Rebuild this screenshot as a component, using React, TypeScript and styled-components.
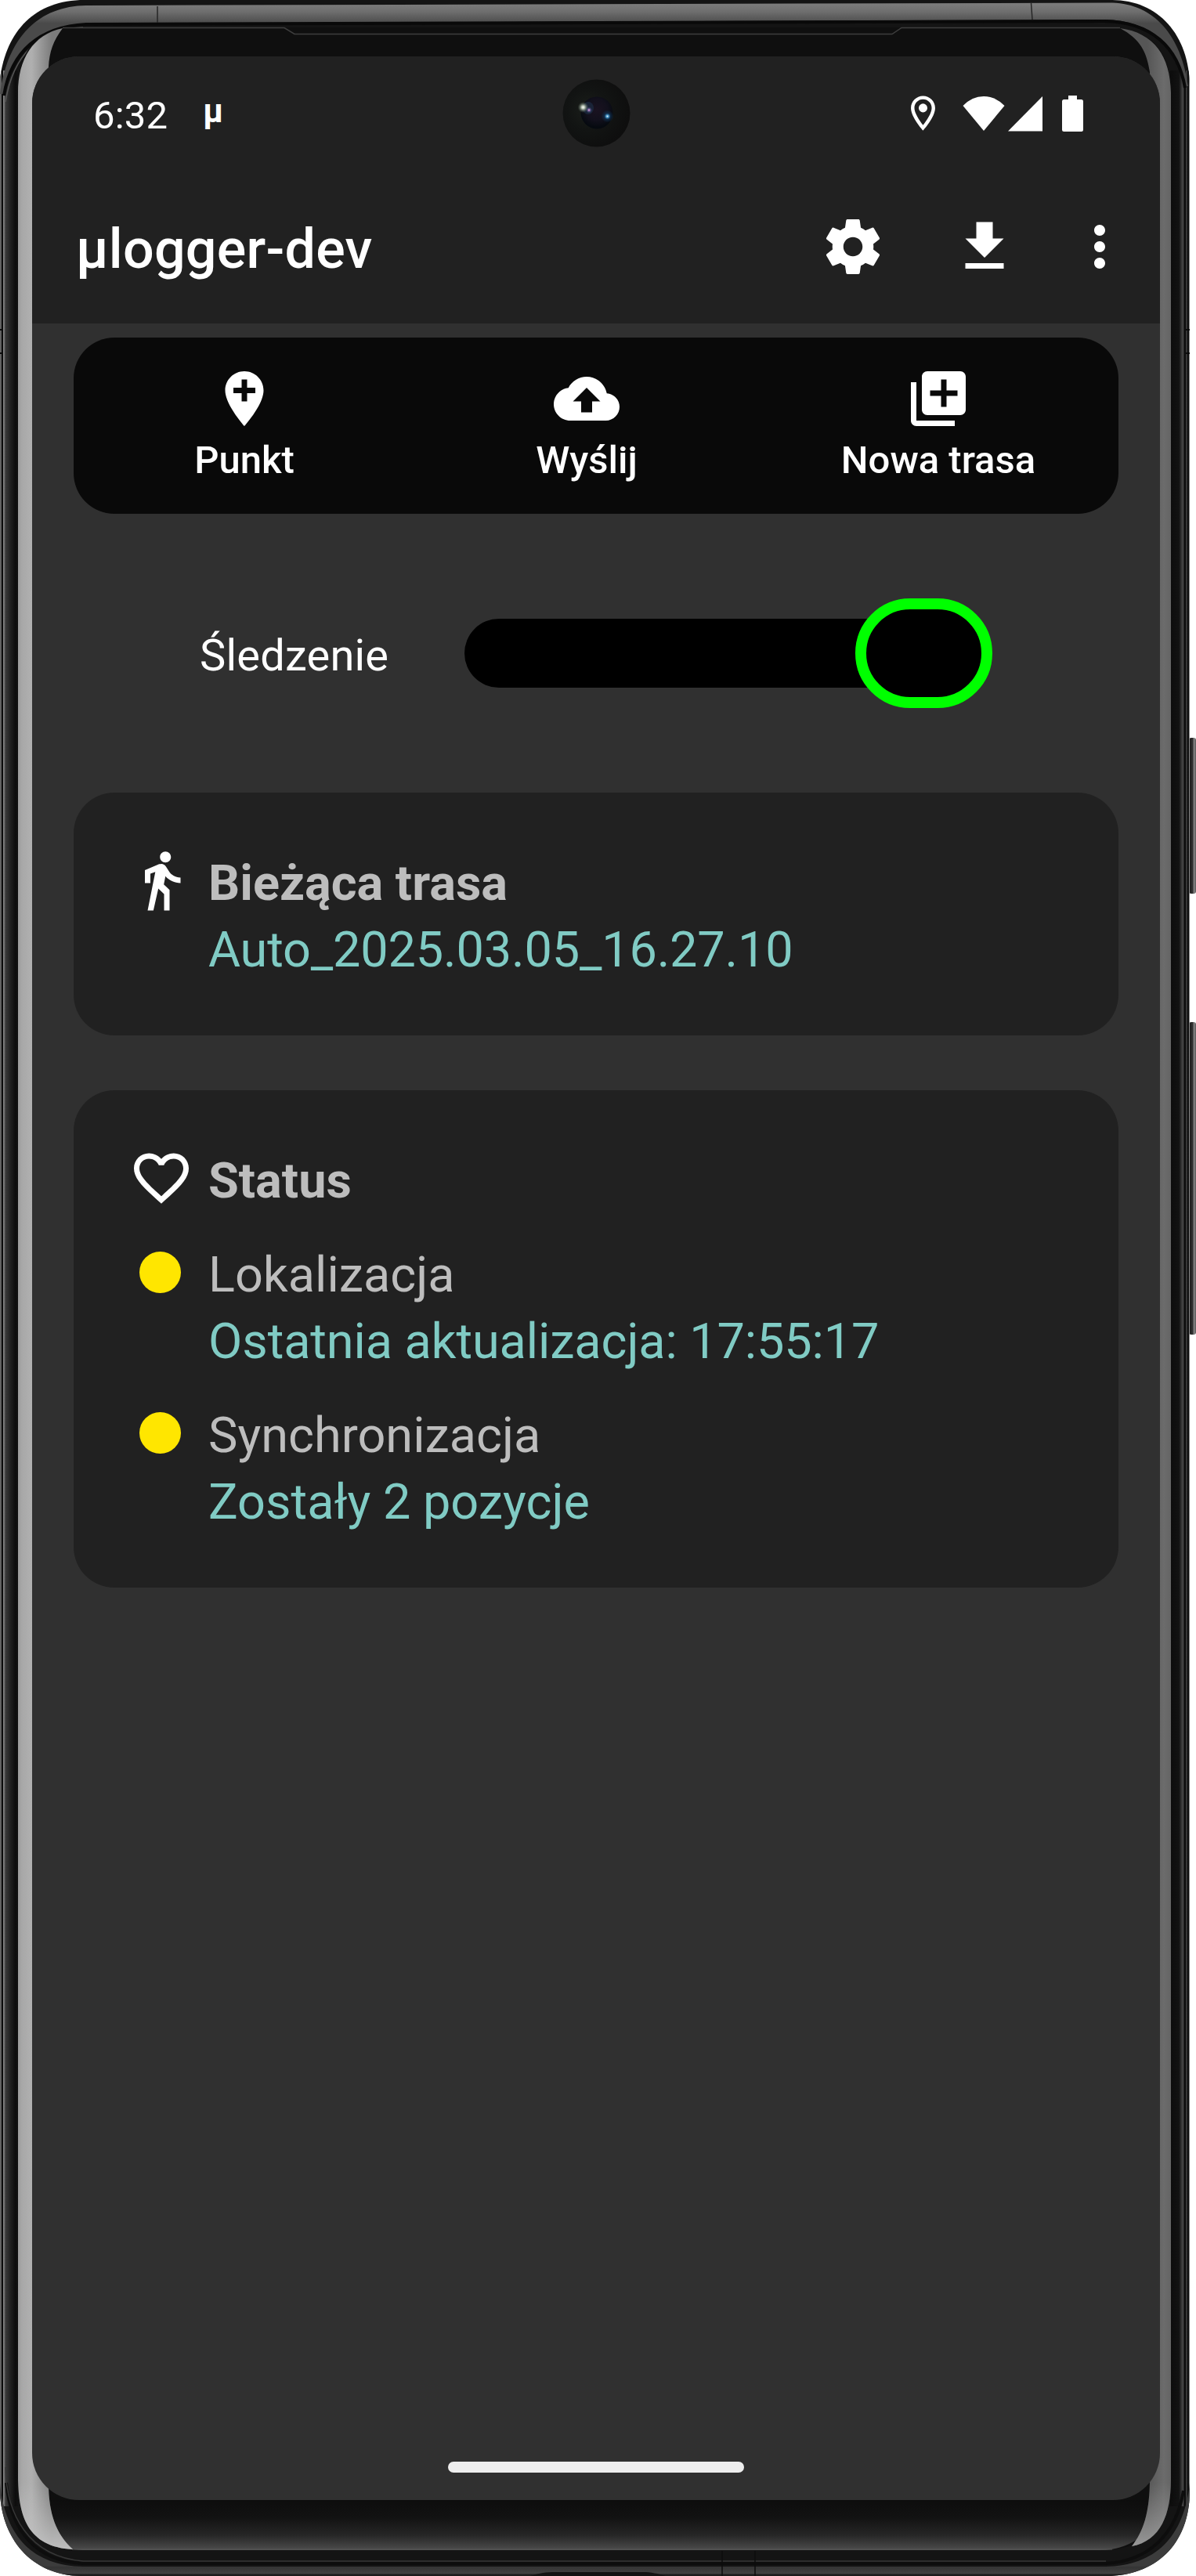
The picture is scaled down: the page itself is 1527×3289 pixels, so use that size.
import React from "react";
import styled, { createGlobalStyle } from "styled-components";

const GlobalStyle = createGlobalStyle`
  * { box-sizing: border-box; }
  body {
    margin: 0;
    background: #ffffff;
    font-family: Roboto, "Noto Sans", sans-serif;
  }
`;

const palette = {
  bar: "#212121",
  surface: "#303030",
  card: "#212121",
  actions: "#090909",
  text: "#ffffff",
  muted: "#bdbdbd",
  accent: "#80cbc4",
  warn: "#ffe600",
  active: "#00ff00",
};

const Device = styled.div`
  position: relative;
  width: 1527px;
  height: 3289px;
  padding: 72px 0 0 41px;
  overflow: hidden;
`;

const FrameArt = styled.svg`
  position: absolute;
  inset: 0;
  display: block;
`;

const Screen = styled.div`
  position: relative;
  display: flex;
  flex-direction: column;
  width: 1440px;
  height: 3120px;
  border-radius: 60px;
  overflow: hidden;
  background: ${palette.surface};
  color: ${palette.text};
`;

const CameraArt = styled.svg`
  position: absolute;
  left: 676px;
  top: 28px;
`;

const StatusBar = styled.div`
  display: flex;
  align-items: center;
  height: 145px;
  padding: 0 98px 0 78px;
  background: ${palette.bar};
`;

const Clock = styled.span`
  padding-top: 6px;
  font-size: 49px;
  line-height: 58px;
  letter-spacing: 0.2px;
`;

const Notification = styled.span`
  margin: -6px 0 0 45px;
  font-size: 42px;
  font-weight: 700;
  line-height: 50px;
`;

const StatusIcons = styled.div`
  display: flex;
  align-items: center;
  margin-left: auto;
`;

const StatusGlyph = styled.svg<{ $gap: number }>`
  display: block;
  fill: currentColor;
  margin-left: ${(p) => p.$gap}px;
`;

const AppBar = styled.header`
  display: flex;
  align-items: center;
  height: 196px;
  padding: 0 35px 0 56px;
  background: ${palette.bar};
`;

const Title = styled.h1`
  margin: 0;
  padding-top: 6px;
  font-size: 70px;
  font-weight: 500;
  line-height: 82px;
  letter-spacing: 0.25px;
`;

const Menu = styled.nav`
  display: flex;
  align-items: center;
  margin-left: auto;
`;

const MenuButton = styled.button<{ $width: number; $gap?: number }>`
  display: grid;
  place-items: center;
  width: ${(p) => p.$width}px;
  height: 168px;
  margin-left: ${(p) => p.$gap ?? 0}px;
  padding: 0;
  border: 0;
  background: none;
  color: inherit;
`;

const Glyph = styled.svg`
  display: block;
  width: 84px;
  height: 84px;
  fill: currentColor;
`;

const Content = styled.main`
  flex: 1;
  display: flex;
  flex-direction: column;
  padding: 18px 53px 0;
`;

const Actions = styled.div`
  display: grid;
  grid-template-columns: 436px 438px 460px;
  height: 225px;
  border-radius: 52px;
  background: ${palette.actions};
`;

const ActionButton = styled.button`
  display: flex;
  flex-direction: column;
  align-items: center;
  gap: 8px;
  padding: 36px 0 0;
  border: 0;
  background: none;
  color: inherit;
  font-family: inherit;
  font-size: 49px;
  font-weight: 500;
  line-height: 58px;
`;

const TrackingRow = styled.div`
  display: flex;
  align-items: center;
  justify-content: space-between;
  height: 140px;
  margin: 108px 0;
  padding: 0 161px 0 161px;
`;

const TrackingLabel = styled.span`
  padding-top: 6px;
  font-size: 56px;
  line-height: 66px;
  letter-spacing: 0.2px;
`;

const Track = styled.div`
  display: flex;
  align-items: center;
  justify-content: flex-end;
  width: 674px;
  height: 88px;
  border-radius: 44px;
  background: #000000;
`;

const Thumb = styled.div`
  flex: none;
  width: 175px;
  height: 140px;
  border: 14px solid ${palette.active};
  border-radius: 70px;
  background: #000000;
`;

const Card = styled.section`
  display: flex;
  flex-direction: column;
  gap: 46px;
  padding: 70px 70px 72px;
  margin-bottom: 70px;
  border-radius: 52px;
  background: ${palette.card};
`;

const Row = styled.div`
  display: grid;
  grid-template-columns: 84px 1fr;
  column-gap: 18px;
  align-items: start;
`;

const IconCell = styled.div`
  height: 74px;
`;

const Lines = styled.div<{ $offset?: number }>`
  display: flex;
  flex-direction: column;
  gap: 11px;
  padding-top: ${(p) => p.$offset ?? 0}px;
`;

const Line = styled.span<{ $accent?: boolean; $bold?: boolean; $tracking?: number }>`
  font-size: 63px;
  line-height: 74px;
  font-weight: ${(p) => (p.$bold ? 700 : 400)};
  letter-spacing: ${(p) => p.$tracking ?? 0}px;
  color: ${(p) => (p.$accent ? palette.accent : palette.muted)};
`;

const Dot = styled.div`
  width: 53px;
  height: 53px;
  margin: 7px 0 0 14px;
  border-radius: 50%;
  background: ${palette.warn};
`;

const NavigationBar = styled.div`
  display: flex;
  justify-content: center;
  height: 49px;
`;

const Handle = styled.div`
  width: 378px;
  height: 14px;
  border-radius: 7px;
  background: #eeeeee;
`;

const icons = {
  settings:
    "M19.43 12.98c.04-.32.07-.64.07-.98s-.03-.66-.07-.98l2.11-1.65c.19-.15.24-.42.12-.64l-2-3.46c-.12-.22-.39-.3-.61-.22l-2.49 1c-.52-.4-1.08-.73-1.69-.98l-.38-2.65C14.46 2.18 14.25 2 14 2h-4c-.25 0-.46.18-.49.42l-.38 2.65c-.61.25-1.17.59-1.69.98l-2.49-1c-.23-.09-.49 0-.61.22l-2 3.46c-.13.22-.07.49.12.64l2.11 1.65c-.04.32-.07.65-.07.98s.03.66.07.98l-2.11 1.65c-.19.15-.24.42-.12.64l2 3.46c.12.22.39.3.61.22l2.49-1c.52.4 1.08.73 1.69.98l.38 2.65c.03.24.24.42.49.42h4c.25 0 .46-.18.49-.42l.38-2.65c.61-.25 1.17-.59 1.69-.98l2.49 1c.23.09.49 0 .61-.22l2-3.46c.12-.22.07-.49-.12-.64l-2.11-1.65zM12 15.5c-1.93 0-3.5-1.57-3.5-3.5s1.57-3.5 3.5-3.5 3.5 1.57 3.5 3.5-1.57 3.5-3.5 3.5z",
  download: "M19 9h-4V3H9v6H5l7 7 7-7zM5 18v2h14v-2H5z",
  more: "M12 8c1.1 0 2-.9 2-2s-.9-2-2-2-2 .9-2 2 .9 2 2 2zm0 2c-1.1 0-2 .9-2 2s.9 2 2 2 2-.9 2-2-.9-2-2-2zm0 6c-1.1 0-2 .9-2 2s.9 2 2 2 2-.9 2-2-.9-2-2-2z",
  addPoint:
    "M12 2C8.14 2 5 5.14 5 9c0 5.25 7 13 7 13s7-7.75 7-13c0-3.86-3.14-7-7-7zm4 8h-3v3h-2v-3H8V8h3V5h2v3h3v2z",
  upload:
    "M19.35 10.04C18.67 6.59 15.64 4 12 4 9.11 4 6.6 5.64 5.35 8.04 2.34 8.36 0 10.91 0 14c0 3.31 2.69 6 6 6h13c2.76 0 5-2.24 5-5 0-2.64-2.05-4.78-4.65-4.96zM14 13v4h-4v-4H7l5-5 5 5h-3z",
  newTrack:
    "M4 6H2v14c0 1.1.9 2 2 2h14v-2H4V6zm16-4H8c-1.1 0-2 .9-2 2v12c0 1.1.9 2 2 2h12c1.1 0 2-.9 2-2V4c0-1.1-.9-2-2-2zm-1 9h-4v4h-2v-4H9V9h4V5h2v4h4v2z",
  walk: "M13.5 5.5c1.1 0 2-.9 2-2s-.9-2-2-2-2 .9-2 2 .9 2 2 2zM9.8 8.9L7 23h2.1l1.8-8 2.1 2v6h2v-7.5l-2.1-2 .6-3C14.8 12 16.8 13 19 13v-2c-1.9 0-3.5-1-4.3-2.4l-1-1.6c-.4-.6-1-1-1.7-1-.3 0-.5.1-.8.1L6 8.3V13h2V9.6l1.8-.7",
  heart:
    "M16.5 3c-1.74 0-3.41.81-4.5 2.09C10.91 3.81 9.24 3 7.5 3 4.42 3 2 5.42 2 8.5c0 3.78 3.4 6.86 8.55 11.54L12 21.35l1.45-1.32C18.6 15.36 22 12.28 22 8.5 22 5.42 19.58 3 16.5 3zm-4.4 15.55l-.1.1-.1-.1C7.14 14.24 4 11.39 4 8.5 4 6.5 5.5 5 7.5 5c1.54 0 3.04.99 3.57 2.36h1.87C13.46 5.99 14.96 5 16.5 5c2 0 3.5 1.5 3.5 3.5 0 2.89-3.14 5.74-7.9 10.05z",
  place:
    "M12 2C8.13 2 5 5.13 5 9c0 5.25 7 13 7 13s7-7.75 7-13c0-3.87-3.13-7-7-7zM7 9c0-2.76 2.24-5 5-5s5 2.24 5 5c0 2.88-2.88 7.19-5 9.88C9.92 16.21 7 11.85 7 9zM12 6.5a2.5 2.5 0 100 5 2.5 2.5 0 000-5z",
};

function Icon({ name }: { name: keyof typeof icons }) {
  return (
    <Glyph viewBox="0 0 24 24" aria-hidden="true">
      <path d={icons[name]} />
    </Glyph>
  );
}

function Frame() {
  return (
    <FrameArt width="1527" height="3289" viewBox="0 0 1527 3289" aria-hidden="true">
      <defs>
        <clipPath id="body">
          <path d="M0 100C8 40 44 0 108 0H1420C1478 0 1519 44 1519 112V3180C1519 3250 1474 3289 1412 3289H104C40 3289 0 3240 0 3178Z" />
        </clipPath>
        <linearGradient id="metalTop" x1="0" y1="0" x2="0" y2="30" gradientUnits="userSpaceOnUse">
          <stop offset="0.2" stopColor="#7a7a7a" />
          <stop offset="0.5" stopColor="#6e6e6e" />
          <stop offset="1" stopColor="#4a4a4a" />
        </linearGradient>
        <linearGradient id="leftEdge" x1="0" y1="0" x2="1" y2="0">
          <stop offset="0" stopColor="#6a6a6a" />
          <stop offset="0.07" stopColor="#5a5a5a" />
          <stop offset="0.1" stopColor="#0b0b0b" />
          <stop offset="0.17" stopColor="#0b0b0b" />
          <stop offset="0.19" stopColor="#858585" />
          <stop offset="0.25" stopColor="#6a6a6a" />
          <stop offset="0.3" stopColor="#3a3a3a" />
          <stop offset="0.6" stopColor="#1f1f1f" />
          <stop offset="0.85" stopColor="#0d0d0d" />
          <stop offset="1" stopColor="#111111" />
        </linearGradient>
        <linearGradient id="rightEdge" x1="0" y1="0" x2="1" y2="0">
          <stop offset="0" stopColor="#0c0c0c" />
          <stop offset="0.45" stopColor="#121212" />
          <stop offset="0.56" stopColor="#2e2e2e" />
          <stop offset="0.64" stopColor="#4a4a4a" />
          <stop offset="0.7" stopColor="#2a2a2a" />
          <stop offset="0.74" stopColor="#0a0a0a" />
          <stop offset="0.8" stopColor="#111111" />
          <stop offset="0.84" stopColor="#606060" />
          <stop offset="0.88" stopColor="#0a0a0a" />
          <stop offset="0.94" stopColor="#111111" />
          <stop offset="0.97" stopColor="#888888" />
          <stop offset="1" stopColor="#8c8c8c" />
        </linearGradient>
        <linearGradient id="leftShine" x1="23" y1="0" x2="66" y2="0" gradientUnits="userSpaceOnUse">
          <stop offset="0" stopColor="#9c9c9c" />
          <stop offset="0.12" stopColor="#a8a8a8" />
          <stop offset="0.4" stopColor="#b0b0b0" />
          <stop offset="1" stopColor="#7c7c7c" />
        </linearGradient>
        <linearGradient id="leftShineEnd" x1="0" y1="3170" x2="0" y2="3254" gradientUnits="userSpaceOnUse">
          <stop offset="0" stopColor="#c4c4c4" stopOpacity="0" />
          <stop offset="1" stopColor="#c4c4c4" stopOpacity="0.9" />
        </linearGradient>
        <linearGradient id="rightShine" x1="1465" y1="0" x2="1495" y2="0" gradientUnits="userSpaceOnUse">
          <stop offset="0" stopColor="#565656" />
          <stop offset="0.7" stopColor="#6c6c6c" />
          <stop offset="1" stopColor="#646464" />
        </linearGradient>
        <linearGradient id="rightShineEnd" x1="0" y1="3170" x2="0" y2="3252" gradientUnits="userSpaceOnUse">
          <stop offset="0" stopColor="#9a9a9a" stopOpacity="0" />
          <stop offset="1" stopColor="#a0a0a0" stopOpacity="0.9" />
        </linearGradient>
        <linearGradient id="glassBottom" x1="0" y1="3192" x2="0" y2="3256" gradientUnits="userSpaceOnUse">
          <stop offset="0" stopColor="#0d0d0d" />
          <stop offset="0.35" stopColor="#121212" />
          <stop offset="0.7" stopColor="#262626" />
          <stop offset="1" stopColor="#4c4c4c" />
        </linearGradient>
        <linearGradient id="metalBottom" x1="0" y1="3276" x2="0" y2="3289" gradientUnits="userSpaceOnUse">
          <stop offset="0" stopColor="#3c3c3c" />
          <stop offset="0.15" stopColor="#343434" />
          <stop offset="0.75" stopColor="#414141" />
          <stop offset="0.85" stopColor="#1c1c1c" />
          <stop offset="1" stopColor="#1c1c1c" />
        </linearGradient>
        <linearGradient id="sideKey" x1="0" y1="0" x2="1" y2="0">
          <stop offset="0" stopColor="#181818" />
          <stop offset="0.5" stopColor="#303030" />
          <stop offset="0.75" stopColor="#888888" />
          <stop offset="1" stopColor="#555555" />
        </linearGradient>
      </defs>

      <rect x="1518" y="942" width="9" height="199" rx="3" fill="url(#sideKey)" />
      <rect x="1518" y="1305" width="9" height="399" rx="3" fill="url(#sideKey)" />

      <g clipPath="url(#body)">
        <rect width="1519" height="3289" fill="#141414" />
        <rect y="90" width="23" height="3110" fill="url(#leftEdge)" />
        <rect x="1494" y="90" width="25" height="3110" fill="url(#rightEdge)" />

        {/* metal band over the top edge and its shoulders */}
        <path
          d="M0 120C10 46 50 8 110 7L1420 3.500C1474 5 1508 46 1517 110L1513 110C1502 58 1470 26 1410 25L110 30C50 33 14 66 5 120Z"
          fill="url(#metalTop)"
        />
        <path d="M5 122C14 66 50 34 110 31L1410 27C1470 28 1504 60 1513 112" fill="none" stroke="#090909" strokeWidth="4" />
        <path d="M7 130C16 74 46 38 106 35" fill="none" stroke="#555555" strokeWidth="1.500" />
        <path d="M201 8V29M1316.500 4L1318 25" stroke="#262626" strokeWidth="1.500" />

        {/* glass */}
        <path
          d="M23 120C23 66 44 36 96 35H1418C1468 38 1495 62 1495 120V3166C1495 3226 1464 3256 1404 3256H106C50 3256 23 3220 23 3166Z"
          fill="#0f0f0f"
        />
        <path
          d="M80 35.500H363L376 43.500H1139L1151 35.500H1430"
          fill="none"
          stroke="#3e3e3e"
          strokeWidth="1.500"
        />

        {/* metal band along the bottom */}
        <path d="M0 3170C6 3240 44 3276 106 3277H1412C1474 3276 1512 3240 1519 3170V3289H0Z" fill="url(#metalBottom)" />
        <path
          d="M8 3170C14 3232 46 3270 106 3273H1412C1466 3270 1502 3236 1511 3180"
          fill="none"
          stroke="#0d0d0d"
          strokeWidth="4"
        />
        <path
          d="M7 3150C8 3210 36 3264 106 3270H1412"
          fill="none"
          stroke="#363636"
          strokeWidth="1.500"
        />
        <path d="M41 3192H1481C1478 3226 1450 3256 1404 3256H106C80 3256 60 3240 52 3222Z" fill="url(#glassBottom)" />
        <path d="M92 3255H1420" stroke="#585858" strokeWidth="1" />

        {/* curved-glass reflections */}
        <path
          d="M80 36C42 44 23 76 23 118V3166C24 3210 34 3252 93 3255C72 3236 62 3210 62 3170V86C63 66 68 52 80 36Z"
          fill="url(#leftShine)"
        />
        <path d="M23 3166C24 3210 34 3252 93 3255C72 3236 62 3210 62 3170Z" fill="url(#leftShineEnd)" />
        <path
          d="M1430 36C1474 42 1494 72 1495 118V3166C1495 3210 1482 3244 1445 3251C1460 3232 1468 3208 1468 3164V92C1464 66 1456 50 1430 36Z"
          fill="url(#rightShine)"
        />
        <path d="M1495 3166C1495 3210 1482 3244 1445 3251C1460 3232 1468 3208 1468 3164Z" fill="url(#rightShineEnd)" />

        <path d="M677 3289C690 3285 696 3284 710 3284H820C832 3284 840 3286 850 3289Z" fill="#121212" />
        <path d="M922 3257V3289M964 3257V3289" stroke="#0d0d0d" strokeWidth="1.500" />
        <path d="M0 421H4M0 451H4M1514 421H1519M1514 451H1519" stroke="#0a0a0a" strokeWidth="2" />
      </g>
    </FrameArt>
  );
}

function Camera() {
  return (
    <CameraArt width="88" height="88" viewBox="0 0 88 88" aria-hidden="true">
      <defs>
        <radialGradient id="bezel" cx="0.38" cy="0.45" r="0.6">
          <stop offset="0" stopColor="#1a1e1a" />
          <stop offset="0.5" stopColor="#121413" />
          <stop offset="1" stopColor="#0e0e0e" />
        </radialGradient>
        <radialGradient id="lens" cx="0.5" cy="0.4" r="0.55">
          <stop offset="0" stopColor="#1a1220" />
          <stop offset="0.6" stopColor="#12101c" />
          <stop offset="1" stopColor="#060a10" />
        </radialGradient>
        <radialGradient id="blueGlint">
          <stop offset="0" stopColor="#d8f2ff" />
          <stop offset="0.25" stopColor="#3a86b8" />
          <stop offset="0.5" stopColor="#12406a" stopOpacity="0.5" />
          <stop offset="1" stopColor="#12406a" stopOpacity="0" />
        </radialGradient>
        <radialGradient id="whiteGlint">
          <stop offset="0" stopColor="#ffffff" />
          <stop offset="0.3" stopColor="#b8c4b4" />
          <stop offset="1" stopColor="#48584c" stopOpacity="0" />
        </radialGradient>
        <radialGradient id="pinkGlint">
          <stop offset="0" stopColor="#f2c4ee" />
          <stop offset="0.35" stopColor="#7c5c98" />
          <stop offset="1" stopColor="#2a4c78" stopOpacity="0" />
        </radialGradient>
      </defs>
      <circle cx="44.500" cy="44.500" r="43" fill="url(#bezel)" />
      <circle cx="45" cy="44" r="20.500" fill="url(#lens)" />
      <ellipse cx="34" cy="38" rx="7" ry="8" fill="#24486a" opacity="0.35" />
      <circle cx="58.500" cy="48.500" r="8" fill="url(#blueGlint)" />
      <circle cx="27.500" cy="37" r="7" fill="url(#whiteGlint)" />
      <circle cx="35" cy="40.500" r="4" fill="url(#pinkGlint)" />
    </CameraArt>
  );
}

export default function App() {
  return (
    <>
      <GlobalStyle />
      <Device>
        <Frame />
        <Screen>
          <StatusBar>
            <Clock>6:32</Clock>
            <Notification>µ</Notification>
            <StatusIcons>
              <StatusGlyph $gap={0} width="53" height="53" viewBox="0 0 24 24">
                <path d={icons.place} />
              </StatusGlyph>
              <StatusGlyph $gap={24} width="54" height="46" viewBox="0 0 54 46">
                <path d="M0.500 13Q12 1 27 1T53.500 13L27 45Z" />
              </StatusGlyph>
              <StatusGlyph $gap={4} width="44" height="46" viewBox="0 0 44 46">
                <path d="M44 1V45.500H0Z" />
              </StatusGlyph>
              <StatusGlyph $gap={25} width="27" height="46" viewBox="0 0 27 46">
                <path d="M8 0H19V5H24.500Q27 5 27 7.500V43.500Q27 46 24.500 46H2.500Q0 46 0 43.500V7.500Q0 5 2.500 5H8Z" />
              </StatusGlyph>
            </StatusIcons>
          </StatusBar>
          <AppBar>
            <Title>µlogger-dev</Title>
            <Menu>
              <MenuButton $width={168} aria-label="Ustawienia">
                <Icon name="settings" />
              </MenuButton>
              <MenuButton $width={168} aria-label="Pobierz">
                <Icon name="download" />
              </MenuButton>
              <MenuButton $width={84} $gap={21} aria-label="Menu">
                <Icon name="more" />
              </MenuButton>
            </Menu>
          </AppBar>
          <Content>
            <Actions>
              <ActionButton>
                <Icon name="addPoint" />
                Punkt
              </ActionButton>
              <ActionButton>
                <Icon name="upload" />
                Wyślij
              </ActionButton>
              <ActionButton>
                <Icon name="newTrack" />
                Nowa trasa
              </ActionButton>
            </Actions>
            <TrackingRow>
              <TrackingLabel>Śledzenie</TrackingLabel>
              <Track role="switch" aria-checked="true">
                <Thumb />
              </Track>
            </TrackingRow>
            <Card>
              <Row>
                <IconCell>
                  <Icon name="walk" />
                </IconCell>
                <Lines $offset={9}>
                  <Line $bold>Bieżąca trasa</Line>
                  <Line $accent $tracking={-0.16}>
                    Auto_2025.03.05_16.27.10
                  </Line>
                </Lines>
              </Row>
            </Card>
            <Card>
              <Row>
                <IconCell>
                  <Icon name="heart" />
                </IconCell>
                <Lines $offset={9}>
                  <Line $bold>Status</Line>
                </Lines>
              </Row>
              <Row>
                <IconCell>
                  <Dot />
                </IconCell>
                <Lines>
                  <Line>Lokalizacja</Line>
                  <Line $accent $tracking={-0.1}>
                    Ostatnia aktualizacja: 17:55:17
                  </Line>
                </Lines>
              </Row>
              <Row>
                <IconCell>
                  <Dot />
                </IconCell>
                <Lines>
                  <Line>Synchronizacja</Line>
                  <Line $accent>Zostały 2 pozycje</Line>
                </Lines>
              </Row>
            </Card>
          </Content>
          <NavigationBar>
            <Handle />
          </NavigationBar>
          <Camera />
        </Screen>
      </Device>
    </>
  );
}
